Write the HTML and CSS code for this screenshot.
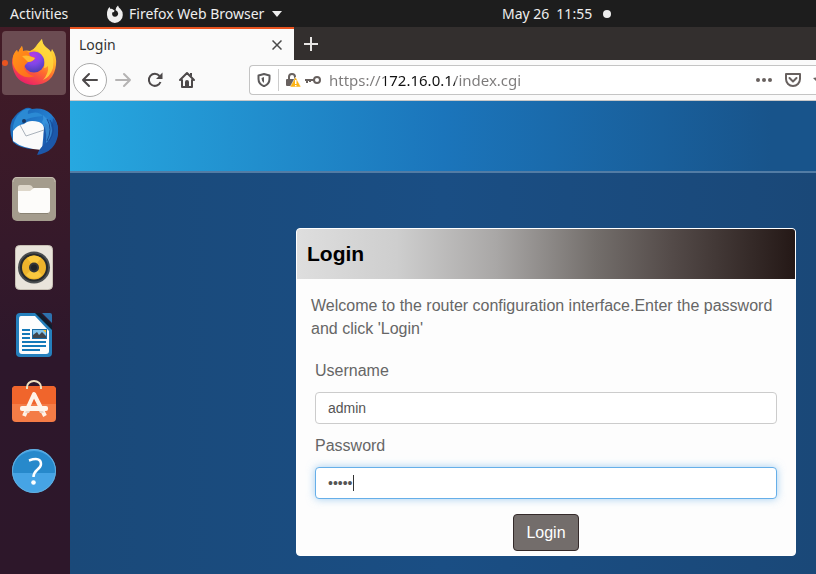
FILE: index.html
```html
<!DOCTYPE html>
<html lang="en">
<head>
<meta charset="utf-8">
<title>Login</title>
<link rel="stylesheet" href="styles.css">
</head>
<body>
<header class="topbar">
  <button class="topbar-item" type="button">Activities</button>
  <button class="topbar-item app-menu" type="button">
    <svg width="18" height="18" viewBox="0 0 18 18" aria-hidden="true"><path fill="#eee" d="M2 4 3.500 2 4.500 4Q6 3.500 7 4.500L8.500 5.500 8 7 6.200 7.500Q5.500 11.500 9 11.800Q12 11.500 12.200 8.500Q12 6 9.500 5Q9.800 2 12 .5Q12.500 2.500 14.500 4Q17 6.500 16.800 10A7.900 7.900 0 0 1 1 10Q.8 6.500 2 4Z"/></svg>
    <span>Firefox Web Browser</span>
    <svg width="10" height="6" viewBox="0 0 10 6" aria-hidden="true"><path fill="#eee" d="M0 0H10L5 6Z"/></svg>
  </button>
  <button class="topbar-item clock" type="button"><span>May 26</span><span>11:55</span><i class="notice"></i></button>
</header>
<div class="desktop">
  <nav class="dock" aria-label="Dock">
    <button class="launcher active" type="button" aria-label="Firefox">
      <svg width="48" height="48" viewBox="0 0 48 48" aria-hidden="true">
        <defs>
          <linearGradient id="fx" x1=".8" y1="0" x2=".3" y2="1"><stop offset="0" stop-color="#fff04a"/><stop offset=".35" stop-color="#ffb52a"/><stop offset=".62" stop-color="#ff6b2e"/><stop offset="1" stop-color="#e91a6c"/></linearGradient>
          <radialGradient id="fp" cx=".45" cy=".2" r=".8"><stop offset="0" stop-color="#b839e5"/><stop offset=".5" stop-color="#8146e8"/><stop offset="1" stop-color="#4c3fb4"/></radialGradient>
          <linearGradient id="fh" x1="0" y1="0" x2="1" y2="1"><stop offset="0" stop-color="#ff9a16"/><stop offset="1" stop-color="#ff651f"/></linearGradient>
        </defs>
        <path fill="url(#fx)" d="M2 24Q2 15 7 11L8 14Q10 9 12 7L13 12Q17 11 20 12Q24 10 26 8Q29 3 32 0Q32 5 37 9Q40 11 41 13L42 10Q47 17 46 26Q44 45 24 46Q4 45 2 24Z"/>
        <circle cx="24" cy="23" r="10.500" fill="url(#fp)"/>
        <path fill="#ffd93d" d="M23 11Q28 4 32 0Q32 6 38 10Q45 17 43 29Q40 38 33 41Q39 34 38 27Q36 29 34 29Q36 20 31 15Q28 11 23 11Z" opacity=".8"/>
        <path fill="url(#fh)" d="M3 25Q2 15 7 11L8 14Q10 9 12 7L13 12Q19 11 20 17L25 19Q24 22 18 23Q15 25 14 29Q17 36 25 37Q17 40 11 36Q5 32 3 25Z"/>
        <path fill="#ffba30" d="M12 17Q17 16 19 17L25 19Q23 23 18 23Q15 20 12 17Z"/>
      </svg>
    </button>
    <button class="launcher" type="button" aria-label="Thunderbird">
      <svg width="50" height="50" viewBox="0 0 50 50" aria-hidden="true">
        <defs><linearGradient id="tb" x1="0" y1="0" x2="1" y2="1"><stop offset="0" stop-color="#175eae"/><stop offset=".5" stop-color="#247fd0"/><stop offset="1" stop-color="#173e94"/></linearGradient></defs>
        <path fill="url(#tb)" d="M3 14Q9 5 17 2Q20 1 23 3Q34 1 42 8Q50 16 49 27Q47 43 29 48L31 43Q12 44 4 36Q-1 24 3 14Z"/>
        <path fill="#2b8ad4" d="M8 10Q15 1 22 3Q18 4 19 8Q29 4 34 10L26 11Q18 12 14 16Q8 20 5 28Q2 20 8 10Z"/>
        <path fill="#fafafa" d="M4 25Q8 19 15 18Q20 13 30 16Q35 18 35 23L33 44Q14 43 4 35Z"/>
        <path fill="none" stroke="#a9b1ba" stroke-width="1" d="M11 19 17 30 35 24"/>
        <path fill="#1c58aa" d="M35 23Q34 35 37 37Q31 41 28 49Q47 46 49 28Q50 18 44 12Q44 18 40 21Q39 18 36 17Z"/>
        <path fill="#429ee3" d="M34 9Q43 17 43 25Q42 33 37 37Q38 29 36 22L33 16Q35 13 34 9Z" opacity=".65"/>
        <path fill="none" stroke="#184d98" d="M38 13Q44 23 38 35M41 14Q48 24 40 35"/>
        <circle cx="15" cy="15" r="2" fill="#173662"/>
      </svg>
    </button>
    <button class="launcher" type="button" aria-label="Files">
      <svg width="46" height="46" viewBox="0 0 46 46" aria-hidden="true"><rect x="1" y="1" width="44" height="44" rx="5" fill="#a49c8d"/><path fill="none" stroke="#c5bdb0" d="M2 6Q2 1.500 6 1.500H40Q44 1.500 44 6"/><path fill="#ded7ca" d="M7 11Q7 9 9 9H18Q21 9 22 12H34V18H7Z"/><path fill="#fdfcfa" d="M7 15H19L23 12H37Q39 12 39 14V34Q39 37 36 37H10Q7 37 7 34Z"/><path fill="none" stroke="#8a8374" d="M9 37.500H37"/></svg>
    </button>
    <button class="launcher" type="button" aria-label="Rhythmbox">
      <svg width="46" height="46" viewBox="0 0 46 46" aria-hidden="true"><rect x="4.500" y="1.500" width="37" height="44" rx="4" fill="#e9e4db" stroke="#c7c0b4"/><circle cx="23" cy="23.500" r="16" fill="#4a4e50"/><circle cx="23" cy="23.500" r="14" fill="#272b2e"/><circle cx="23" cy="23.500" r="12" fill="#eeb42c"/><path fill="#fac93f" d="M23 23 16 14A11 11 0 0 1 30 14ZM23 23 31 31A11 11 0 0 1 15 31Z"/><circle cx="23" cy="23.500" r="5" fill="#343638"/><circle cx="23" cy="23.500" r="3" fill="#202426"/></svg>
    </button>
    <button class="launcher" type="button" aria-label="LibreOffice Writer">
      <svg width="46" height="46" viewBox="0 0 46 46" aria-hidden="true"><path fill="#2580bd" d="M9 1H28L41 14V41Q41 45 37 45H9Q5 45 5 41V5Q5 1 9 1Z"/><path fill="#fdfdfd" d="M10 4H24L38 19V39Q38 42 35 42H11Q8 42 8 39V7Q8 4 10 4Z"/><path fill="#2d72ae" d="M31 1H39Q41 1 41 3V11Z"/><path fill="#101d2d" d="M24 1H29L41 13V18Z"/><path fill="none" stroke="#1479b9" stroke-width="2" d="M11 18H19M11 22H19M11 26H19M11 30H35M11 34H35M11 38H29"/><rect x="21.500" y="17.500" width="14" height="9" fill="#80c3eb" stroke="#176ba5"/><path fill="#40464b" d="M22 26V23L26 20 28 23 31 20 35 24V26Z"/><path fill="#f5bd2a" d="M32 18H35V21Z"/></svg>
    </button>
    <button class="launcher" type="button" aria-label="Ubuntu Software">
      <svg width="46" height="46" viewBox="0 0 46 46" aria-hidden="true"><rect x="1" y="6" width="44" height="36" rx="4" fill="#f47c46"/><path fill="#f0652c" d="M5 6H41Q45 6 45 10V24H1V10Q1 6 5 6Z"/><path fill="none" stroke="#efe1bf" stroke-width="2" d="M16 9V7A7 6 0 0 1 30 7V9"/><path fill="none" stroke="#fff3e7" stroke-width="4" stroke-linejoin="round" d="M13 36 23 14 34 36"/><rect x="9" y="26" width="28" height="5" rx="2" fill="#fff5eb"/><path fill="#e9d7cb" d="M15 31 14 33H18L19 31ZM28 31 29 33H33L32 31Z"/></svg>
    </button>
    <button class="launcher" type="button" aria-label="Help">
      <svg width="46" height="46" viewBox="0 0 46 46" aria-hidden="true"><circle cx="23" cy="23" r="22" fill="#46a4e5"/><path fill="#2789cb" d="M1 25A22 22 0 1 1 45 25Z"/><circle cx="23" cy="23" r="21.500" fill="none" stroke="#62aedf"/><path fill="none" stroke="#fff" stroke-width="2.500" d="M18 12.500Q30 8.500 30 16Q30 19 26 22Q22.500 25 22.500 29"/><circle cx="22.500" cy="34.500" r="2.300" fill="#fff"/></svg>
    </button>
  </nav>
  <main class="window">
    <div class="tabs">
      <div class="tab"><span>Login</span>
        <button class="plain" type="button" aria-label="Close tab"><svg width="10" height="10" viewBox="0 0 10 10"><path fill="none" stroke="#4a4a4a" stroke-width="1.500" d="M.5.5 9.500 9.500M9.500.5.500 9.500"/></svg></button>
      </div>
      <button class="plain new-tab" type="button" aria-label="New tab"><svg width="14" height="14" viewBox="0 0 14 14"><path stroke="#e8e6e4" stroke-width="2" d="M7 0V14M0 7H14"/></svg></button>
    </div>
    <div class="toolbar">
      <button class="tool back" type="button" aria-label="Back"><svg width="18" height="18" viewBox="0 0 18 18"><path fill="none" stroke="#4d494a" stroke-width="2" stroke-linecap="round" stroke-linejoin="round" d="M8 3 2 9 8 15M2 9H16"/></svg></button>
      <button class="tool" type="button" aria-label="Forward"><svg width="18" height="18" viewBox="0 0 18 18"><path fill="none" stroke="#b5b3b3" stroke-width="2" stroke-linecap="round" stroke-linejoin="round" d="M10 3 16 9 10 15M16 9H2"/></svg></button>
      <button class="tool" type="button" aria-label="Reload"><svg width="18" height="18" viewBox="0 0 18 18"><path fill="none" stroke="#4d494a" stroke-width="2" d="M13.500 5A6 6 0 1 0 14.500 11"/><path fill="#4d494a" d="M16.500 1.500V8H10Z"/></svg></button>
      <button class="tool" type="button" aria-label="Home"><svg width="18" height="18" viewBox="0 0 18 18"><path fill="none" stroke="#4d494a" stroke-width="2" stroke-linejoin="round" stroke-linecap="round" d="M2 9 9 2 16 9M4 9V16H14V9"/><path fill="#4d494a" d="M7 16V11Q7 9 9 9T11 11V16ZM12 2H14V6L12 4Z"/></svg></button>
      <div class="urlbar">
        <svg class="shield" width="14" height="14" viewBox="0 0 14 14" aria-hidden="true"><path fill="none" stroke="#5c5a5b" stroke-width="2" stroke-linejoin="round" d="M7 1 12.500 2.500V6Q12.500 11 7 13.200Q1.500 11 1.500 6V2.500Z"/><path fill="#5c5a5b" d="M7 4V10Q4.500 8.500 4.500 5Z"/></svg>
        <svg width="15" height="16" viewBox="0 0 15 16" aria-hidden="true"><path fill="none" stroke="#68615f" stroke-width="2" d="M3 8V5A3 3 0 0 1 9 5V7"/><rect x="0" y="7" width="11" height="7" rx="1" fill="#68615f"/><path fill="#fdb313" stroke="#fff" stroke-width=".5" d="M9.500 5 15 15H4Z"/><path fill="#fff" d="M9 8H10.500V12H9ZM9 13H10.500V14.300H9Z"/></svg>
        <svg class="key" width="16" height="10" viewBox="0 0 16 10" aria-hidden="true"><circle cx="12" cy="5" r="3" fill="none" stroke="#68615f" stroke-width="2"/><path fill="none" stroke="#68615f" stroke-width="2" d="M9 5H0M2 5V8M5 5V7"/></svg>
        <input class="url" type="text" aria-label="Address" value="https://172.16.0.1/index.cgi">
        <svg width="18" height="6" viewBox="0 0 18 6" aria-hidden="true"><g fill="#68615f"><circle cx="3" cy="3" r="2"/><circle cx="9" cy="3" r="2"/><circle cx="15" cy="3" r="2"/></g></svg>
        <svg width="16" height="14" viewBox="0 0 16 14" aria-hidden="true"><path fill="none" stroke="#68615f" stroke-width="2" stroke-linejoin="round" d="M1 1H15V6A7 7 0 0 1 1 6Z"/><path fill="none" stroke="#68615f" stroke-width="2" stroke-linecap="round" stroke-linejoin="round" d="M4.500 5 8 8.500 11.500 5"/></svg>
        <svg class="star" width="16" height="16" viewBox="0 0 16 16" aria-hidden="true"><path fill="#68615f" d="M8 0 10 5 16 6 12 10 13 16 8 13 3 16 4 10 0 6 6 5Z"/></svg>
      </div>
    </div>
    <div class="page">
      <div class="banner"></div>
      <form class="card">
        <h1>Login</h1>
        <div class="card-body">
          <p>Welcome to the router configuration interface.Enter the password and click 'Login'</p>
          <div class="field">
            <label for="user">Username</label>
            <input id="user" type="text" value="admin">
          </div>
          <div class="field">
            <label for="pass">Password</label>
            <div class="entry"><input id="pass" class="focused" type="password" value="admin"><i class="caret"></i></div>
          </div>
          <button class="submit" type="button">Login</button>
        </div>
      </form>
    </div>
  </main>
</div>
</body>
</html>
```
FILE: styles.css
```css
* { box-sizing: border-box; }
body {
  margin: 0;
  min-height: 100vh;
  display: flex;
  flex-direction: column;
  overflow: hidden;
  background: #1a4a7c;
  font-family: "Noto Sans", "Open Sans", sans-serif;
  font-size: 14px;
}
button { font: inherit; border: 0; padding: 0; background: none; }
svg { display: block; flex: none; }

.topbar {
  height: 27px;
  padding: 0 10px;
  display: grid;
  grid-template-columns: 96px 396px 1fr;
  align-items: center;
  background: #1d1d1d;
}
.topbar-item {
  display: flex;
  align-items: center;
  line-height: 20px;
  color: #eee;
  white-space: nowrap;
}
.app-menu { gap: 5px; }
.app-menu span { margin-right: 3px; }
.clock { gap: 7px; }
.notice { width: 8px; height: 8px; margin-left: 4px; border-radius: 50%; background: #eee; }

.desktop { flex: 1; display: flex; }
.dock {
  width: 70px;
  flex: none;
  padding: 4px 2px;
  display: flex;
  flex-direction: column;
  gap: 4px;
  background: linear-gradient(#431b26, #35192a 40%, #2d172b 60%, #2d172a);
}
.launcher {
  position: relative;
  width: 64px;
  height: 64px;
  display: grid;
  place-items: center;
  border-radius: 4px;
}
.active { background: #6b4c52; }
.active::before {
  content: "";
  position: absolute;
  left: 0;
  top: 29px;
  width: 6px;
  height: 6px;
  border-radius: 50%;
  background: #e95420;
}

.window { flex: 1; min-width: 0; display: flex; flex-direction: column; }
.tabs { height: 33px; display: flex; background: #332f2e; }
.tab {
  width: 224px;
  padding: 0 12px 0 9px;
  display: flex;
  align-items: center;
  justify-content: space-between;
  border-top: 2px solid #e95420;
  background: #fafafa;
  color: #333;
}
.plain { display: grid; place-items: center; }
.new-tab { width: 34px; }
.toolbar {
  height: 41px;
  padding-left: 3px;
  display: flex;
  align-items: center;
  overflow: hidden;
  background: #fafafa;
  border-bottom: 1px solid #c8c8c8;
}
.tool { width: 32px; height: 34px; flex: none; display: grid; place-items: center; }
.back { width: 34px; border: 1px solid #aaa; border-radius: 50%; background: #fff; }
.urlbar {
  flex: 1;
  min-width: 0;
  height: 30px;
  margin-left: 46px;
  padding-left: 7px;
  display: flex;
  align-items: center;
  gap: 12px;
  border: 1px solid #c4c4c4;
  border-right: 0;
  border-radius: 4px 0 0 4px;
  background: #fff;
  overflow: hidden;
}
.shield { box-sizing: content-box; padding: 4px 7px 4px 0; border-right: 1px solid #ccc; margin-right: -5px; }
.key { margin-left: -8px; margin-right: -4px; }
.star { margin-right: -13px; }
.url {
  flex: 1;
  min-width: 0;
  height: 28px;
  padding: 0;
  border: 0;
  outline: 0;
  font: inherit;
  font-size: 15px;
  color: transparent;
  background: linear-gradient(90deg, #7c7a7a 56px, #111 56px 126px, #7c7a7a 126px);
  -webkit-background-clip: text;
  background-clip: text;
}

.page {
  flex: 1;
  display: flex;
  flex-direction: column;
  background: linear-gradient(90deg, #1a4979, #1a4e84 50%, #1a4878);
  font-family: "Liberation Sans", Arial, sans-serif;
  font-size: 16px;
  color: #666;
}
.banner {
  height: 72px;
  background: linear-gradient(90deg, #27a8e0, #1b75bb 50%, #18548b 94%);
  border-bottom: 2px solid #527ca5;
}
.card {
  width: 500px;
  max-width: 100%;
  margin: 55px 20px 0 auto;
  border: 1px solid #fff;
  border-radius: 4px;
  background: #fdfdfd;
  overflow: hidden;
}
.card h1 {
  margin: 0;
  padding: 0 10px;
  font-size: 21px;
  line-height: 50px;
  color: #000;
  background: linear-gradient(90deg, #dedede, #cecece 20%, #a9a7a6 40%, #736e6b 60%, #544b49 75%, #241816);
}
.card-body { padding: 15px 14px 4px; display: flex; flex-direction: column; }
.card p { margin: 0 0 19px; line-height: 23px; }
.field { display: flex; flex-direction: column; gap: 9px; margin: 0 4px 10px; line-height: 24px; }
.field input {
  display: block;
  width: 100%;
  height: 32px;
  padding: 0 12px;
  border: 1px solid #ccc;
  border-radius: 4px;
  outline: 0;
  background: #fff;
  font: 14px "Liberation Sans", Arial, sans-serif;
  color: #555;
}
.field .focused { border-color: #66afe9; box-shadow: 0 0 8px rgba(102, 175, 233, 0.6); }
.entry { position: relative; }
.caret { position: absolute; left: 38px; top: 8px; width: 1px; height: 16px; background: #333; }
.submit {
  align-self: center;
  margin-top: 5px;
  padding: 0 12px;
  border: 1px solid #342a2a;
  border-radius: 4px;
  line-height: 35px;
  background: #736d6b;
  color: #fff;
}
```
